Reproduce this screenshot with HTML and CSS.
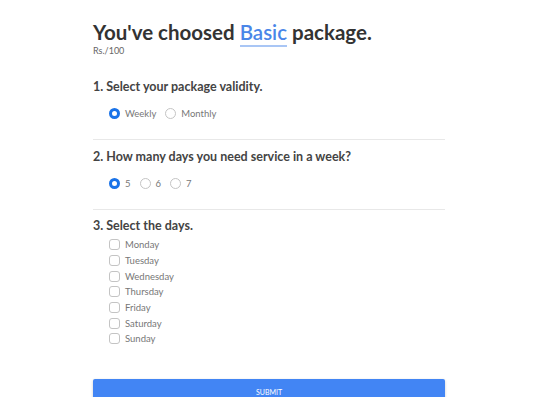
FILE: index.html
```html
<!DOCTYPE html>
<html lang="en">
<head>
  <meta charset="UTF-8">
  <title>Package</title>
  <link rel="stylesheet" href="styles.css">
</head>
<body>
  <div class="package">
    <h2 class="title">You've choosed <span class="plan">Basic</span> package.</h2>
    <p class="price">Rs./100</p>

    <div class="step first">
      <h4>1. Select your package validity.</h4>
      <div class="options">
        <label><input type="radio" name="validity" checked> Weekly</label>
        <label><input type="radio" name="validity"> Monthly</label>
      </div>
    </div>

    <div class="step">
      <h4>2. How many days you need service in a week?</h4>
      <div class="options">
        <label><input type="radio" name="days" checked> 5</label>
        <label><input type="radio" name="days"> 6</label>
        <label><input type="radio" name="days"> 7</label>
      </div>
    </div>

    <div class="step last">
      <h4>3. Select the days.</h4>
      <div class="days">
        <label><input type="checkbox"> Monday</label>
        <label><input type="checkbox"> Tuesday</label>
        <label><input type="checkbox"> Wednesday</label>
        <label><input type="checkbox"> Thursday</label>
        <label><input type="checkbox"> Friday</label>
        <label><input type="checkbox"> Saturday</label>
        <label><input type="checkbox"> Sunday</label>
      </div>
    </div>

    <button class="submit">SUBMIT</button>
  </div>
</body>
</html>
```

FILE: styles.css
```css
body {
  margin: 0;
  font-family: Lato, "Noto Sans", Arial, sans-serif;
  color: #3a3a3a;
  background: #fff;
}

.package {
  width: 352px;
  margin: 0 auto;
  padding-top: 19px;
}

.title {
  margin: 0;
  font-size: 20.5px;
  font-weight: 700;
  color: #333;
  line-height: 26px;
}

.plan {
  color: #4a86e8;
  font-weight: 600;
  border-bottom: 2px solid #a9c6f5;
  padding-bottom: 1px;
}

.price {
  margin: 1px 0 0;
  font-size: 9px;
  line-height: 10px;
  color: #666;
}

.step {
  border-bottom: 1px solid #e8e8e8;
  padding: 9px 0 19px;
}

.step.first {
  padding-top: 23px;
}

.step.last {
  border-bottom: none;
  padding: 8px 0 0;
}

.step h4 {
  margin: 0;
  font-size: 12.5px;
  line-height: 16px;
  font-weight: 700;
  color: #444;
}

.options {
  display: flex;
  gap: 9px;
  margin-top: 11px;
  padding-left: 16px;
}

.options label,
.days label {
  display: flex;
  align-items: center;
  height: 14px;
  font-size: 9.5px;
  color: #777;
}

.options input,
.days input {
  appearance: none;
  width: 11px;
  height: 11px;
  margin: 0 5px 0 0;
  border: 1px solid #c4c4c4;
  background: #fff;
}

.options input {
  border-radius: 50%;
}

.options input:checked {
  border: 3px solid #1a73e8;
}

.days input {
  border-radius: 3px;
}

.days {
  display: flex;
  flex-direction: column;
  margin-top: 3px;
  padding-left: 16px;
}

.days label {
  height: 15.7px;
}

.submit {
  display: block;
  width: 100%;
  height: 26px;
  margin-top: 32px;
  border: none;
  border-radius: 2px;
  background: #4285f4;
  color: #fff;
  font-family: inherit;
  font-size: 7px;
  box-shadow: 0 1px 3px rgba(0,0,0,0.2);
}
```
